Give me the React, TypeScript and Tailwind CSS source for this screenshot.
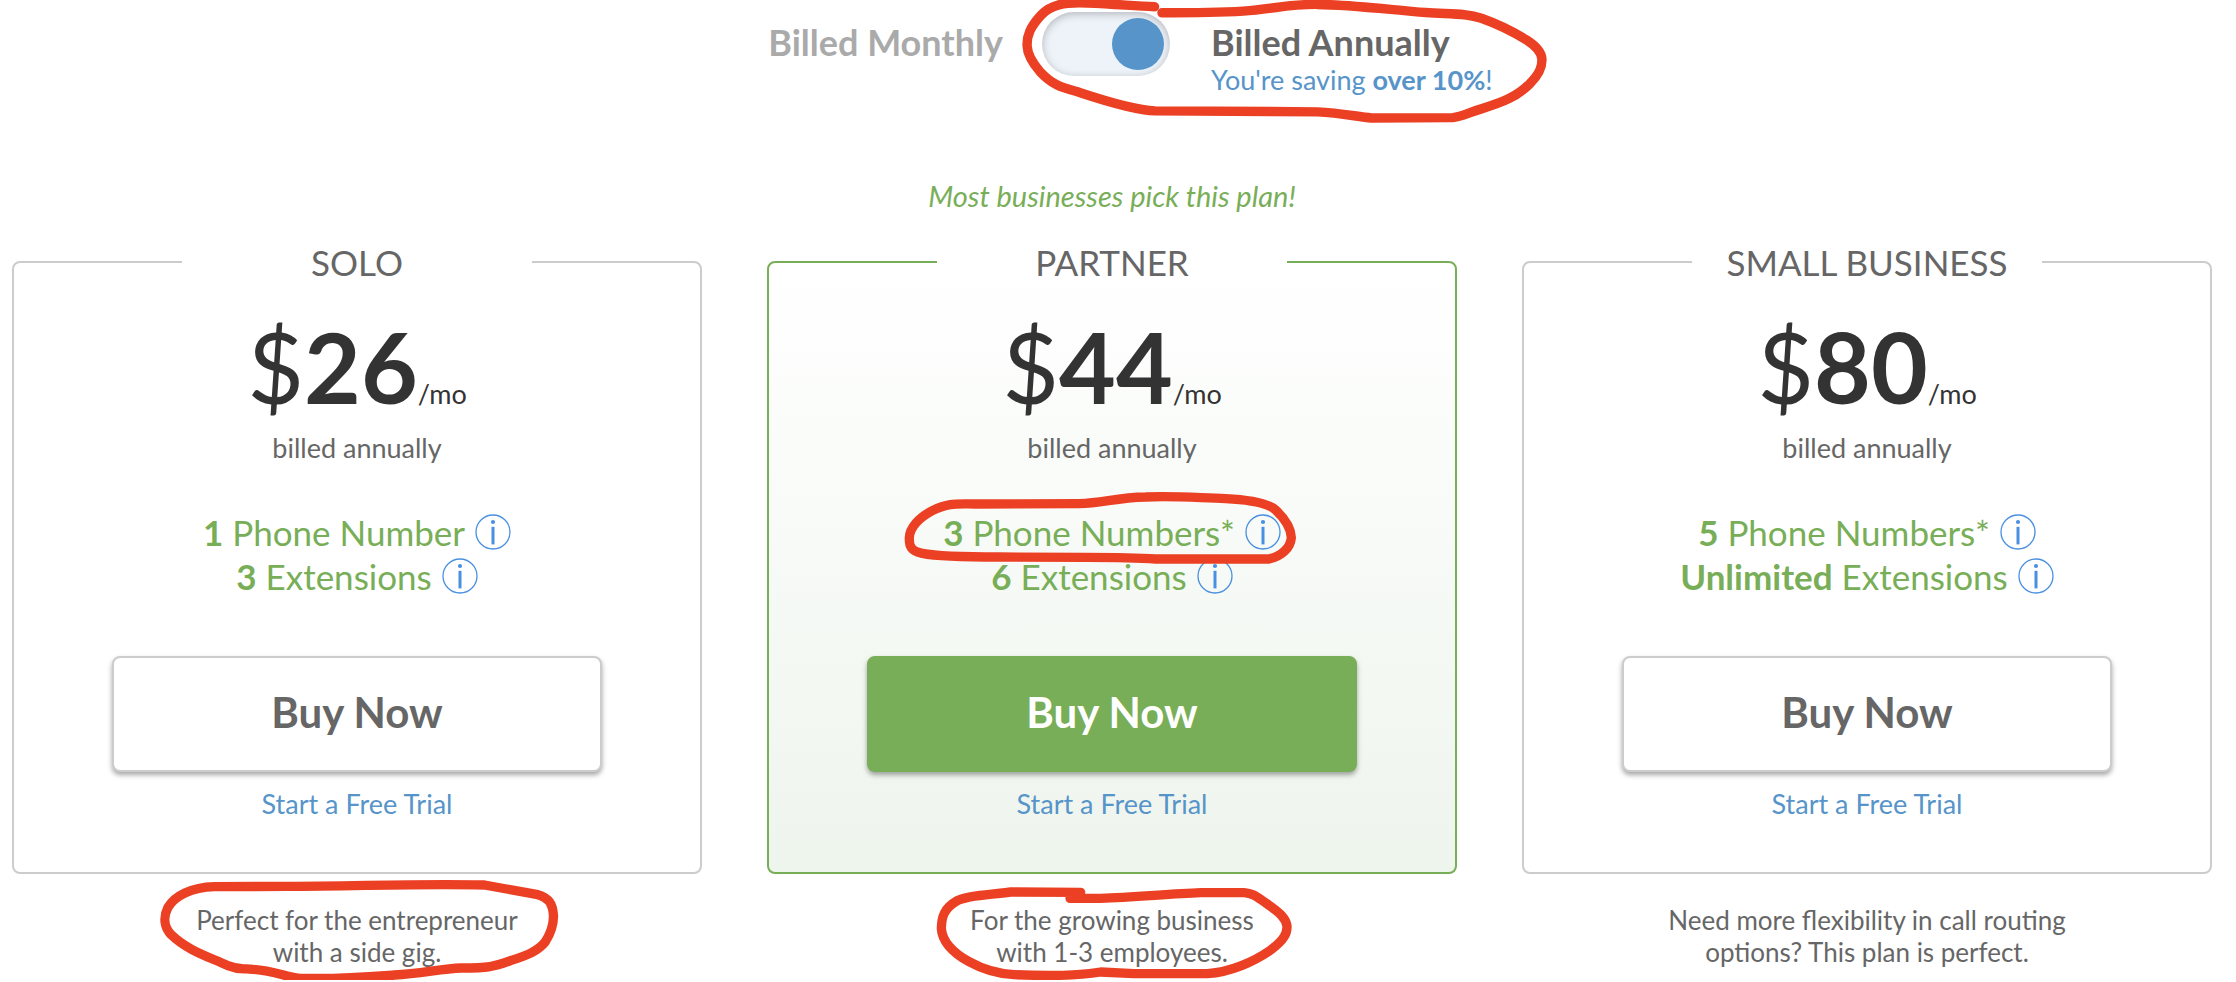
import React, { useState } from 'react';
import clsx from 'clsx';

interface Plan {
  name: string;
  price: number;
  numbers: string;
  numbersLabel: string;
  extensions: string;
  caption: [string, string];
  featured?: boolean;
  numbersMark?: MarkShape;
  captionMark?: MarkShape;
}

interface MarkShape {
  viewBox: string;
  d: string;
}

const TOGGLE_MARK: MarkShape = {
  viewBox: '0 0 1568 370',
  d: 'M398 20 C330 17 280 12 200 9 C130 6 90 14 62 45 C30 80 20 105 21 135 C22 165 40 190 60 213 C95 250 120 258 165 270 C220 288 330 326 400 328 L880 331 C950 334 1000 346 1040 349 L1280 348 C1305 346 1330 332 1365 322 C1430 302 1470 286 1508 248 C1540 216 1545 195 1544 175 C1543 150 1520 132 1500 119 C1450 88 1410 70 1365 54 C1320 38 1270 42 1200 37 C1110 31 990 14 880 13 C800 12 750 26 660 33 C590 37 510 38 420 38',
};

const NUMBERS_MARK: MarkShape = {
  viewBox: '39 0 1200 255',
  d: 'M300 213 C210 213 120 212 70 202 C35 195 30 180 31 155 C32 125 60 95 100 74 C150 50 170 54 230 54 L540 53 C610 52 650 35 740 33 C830 29 900 36 980 38 C1060 42 1110 54 1130 72 C1160 100 1176 130 1177 155 C1174 185 1150 210 1110 219 L770 219 C700 214 640 214 560 214 Z',
};

const SOLO_MARK: MarkShape = {
  viewBox: '0 0 1215 321',
  d: 'M295 280 C360 284 400 305 440 307 C560 310 640 303 720 297 C800 293 860 278 920 276 C1000 276 1020 272 1070 253 C1120 237 1150 225 1172 198 C1190 170 1197 150 1197 120 C1195 80 1180 65 1150 56 L990 27 C800 22 600 31 400 31 L180 32 C110 34 60 60 40 95 C25 125 30 155 50 176 C100 225 170 245 220 269 C260 285 270 275 295 280 Z',
};

const PARTNER_MARK: MarkShape = {
  viewBox: '-6 0 1080 306',
  d: 'M440 37 L230 36 C160 45 100 46 70 62 C30 85 23 110 22 145 C25 190 60 220 105 245 C150 270 200 282 240 284 C330 288 440 286 500 276 L600 281 L820 281 C890 276 960 245 1010 210 C1050 180 1060 160 1059 138 C1055 110 1030 95 1000 72 C970 52 960 40 930 38 L800 38 C700 42 600 52 500 55 L408 55',
};

const PLANS: Plan[] = [
  {
    name: 'SOLO',
    price: 26,
    numbers: '1',
    numbersLabel: 'Phone Number',
    extensions: '3',
    caption: ['Perfect for the entrepreneur', 'with a side gig.'],
    captionMark: SOLO_MARK,
  },
  {
    name: 'PARTNER',
    price: 44,
    numbers: '3',
    numbersLabel: 'Phone Numbers*',
    extensions: '6',
    caption: ['For the growing business', 'with 1-3 employees.'],
    featured: true,
    numbersMark: NUMBERS_MARK,
    captionMark: PARTNER_MARK,
  },
  {
    name: 'SMALL BUSINESS',
    price: 80,
    numbers: '5',
    numbersLabel: 'Phone Numbers*',
    extensions: 'Unlimited',
    caption: ['Need more flexibility in call routing', 'options? This plan is perfect.'],
  },
];

// Hand-drawn red ring laid over the content it highlights
const Mark: React.FC<{ shape: MarkShape; className: string }> = ({ shape, className }) => (
  <svg
    viewBox={shape.viewBox}
    className={clsx('pointer-events-none absolute z-10 max-w-none overflow-visible', className)}
    fill="none"
    stroke="#ec4025"
    strokeWidth="28"
    strokeLinejoin="round"
    strokeLinecap="round"
    aria-hidden="true"
  >
    <path d={shape.d} />
  </svg>
);

const InfoButton: React.FC<{ label: string }> = ({ label }) => (
  <button type="button" aria-label={label} className="cursor-pointer text-[#4a90e2]">
    <svg viewBox="0 0 36 36" className="size-9" aria-hidden="true">
      <circle cx="18" cy="18" r="17" fill="none" stroke="currentColor" strokeWidth="1.3" />
      <circle cx="18" cy="8" r="2.1" fill="currentColor" />
      <rect x="16.5" y="12.8" width="3" height="17.6" fill="currentColor" />
    </svg>
  </button>
);

const Feature: React.FC<{ amount: string; label: string; mark?: MarkShape }> = ({ amount, label, mark }) => (
  <li className="relative flex h-11 items-center justify-center gap-2.5">
    <span>
      <strong className="font-bold">{amount}</strong> {label}
    </span>
    <InfoButton label={`About ${label}`} />
    {mark && <Mark shape={mark} className="-top-6 left-1/2 w-[400px] -translate-x-1/2" />}
  </li>
);

const PlanCard: React.FC<{ plan: Plan; period: string }> = ({ plan, period }) => (
  <article className="text-center">
    <fieldset
      className={clsx(
        'rounded-lg border-2 px-[98px] pb-[50px]',
        plan.featured ? 'border-[#78ae57] bg-linear-to-b from-white to-[#eef5ed]' : 'border-[#cccccc]',
      )}
    >
      <legend className="mx-auto w-[350px] text-[35px] leading-10">{plan.name}</legend>
      <p className="mt-9 text-[98px] leading-24 text-[#333333]">
        $<strong className="font-bold">{plan.price}</strong>
        <span className="text-[27px] leading-none">/mo</span>
      </p>
      <p className="mt-4 text-[27px] leading-9">{period}</p>
      <ul className="mt-11 text-[35px] leading-11 text-[#78ae57]">
        <Feature amount={plan.numbers} label={plan.numbersLabel} mark={plan.numbersMark} />
        <Feature amount={plan.extensions} label="Extensions" />
      </ul>
      <button
        type="button"
        className={clsx(
          'mt-[58px] h-[116px] w-full cursor-pointer rounded-lg border-2 pb-1 text-[42px] font-bold shadow-[0_3px_5px_rgba(0,0,0,0.35)]',
          plan.featured ? 'border-[#78ae57] bg-[#78ae57] text-white' : 'border-[#cccccc] bg-white',
        )}
      >
        Buy Now
      </button>
      <a href="#trial" className="mt-3.5 inline-block text-[27px] leading-9 text-[#5694c9]">
        Start a Free Trial
      </a>
    </fieldset>
    <p className="relative mt-[30px] text-[26px] leading-8">
      {plan.caption[0]}
      <br />
      {plan.caption[1]}
      {plan.captionMark && (
        <Mark
          shape={plan.captionMark}
          className={clsx(
            'left-1/2 -translate-x-1/2',
            plan.featured ? '-top-6 w-[360px]' : '-top-7 w-[405px]',
          )}
        />
      )}
    </p>
  </article>
);

export default function App() {
  const [annual, setAnnual] = useState(true);

  return (
    <main className="overflow-hidden bg-white pb-3 font-[Lato,'Open_Sans',sans-serif] text-[#666666]">
      <div className="grid grid-cols-[1fr_auto_1fr] items-start pt-3 pr-9 pl-3">
        <span className="mt-2.5 mr-[39px] text-right text-[36px] leading-10 font-bold text-[#aaaaaa]">Billed Monthly</span>
        <div className="relative">
          <input
            id="annual"
            type="checkbox"
            role="switch"
            checked={annual}
            onChange={(e) => setAnnual(e.target.checked)}
            className="flex h-16 w-32 cursor-pointer appearance-none items-center rounded-full bg-[#eef3fa] px-[6px] shadow-[inset_0_2px_8px_rgba(0,0,0,0.25)] before:size-[52px] before:rounded-full before:bg-[#5694c9] checked:before:ml-auto"
          />
          <Mark shape={TOGGLE_MARK} className="-top-3 -left-[22px] w-[530px]" />
        </div>
        <label htmlFor="annual" className="mt-2.5 ml-[41px] cursor-pointer">
          <span className="block text-[36px] leading-10 font-bold">Billed Annually</span>
          <span className="block text-[27px] leading-9 text-[#5694c9]">
            You're saving <strong className="font-bold">over 10%</strong>!
          </span>
        </label>
      </div>

      <p className="mt-20 pr-6 pl-3 text-center text-[29px] leading-9 text-[#78ae57] italic">
        Most businesses pick this plan!
      </p>

      <div className="mt-7 grid grid-cols-3 gap-[65px] pr-6 pl-3">
        {PLANS.map((plan) => (
          <PlanCard key={plan.name} plan={plan} period={annual ? 'billed annually' : 'billed monthly'} />
        ))}
      </div>
    </main>
  );
}
